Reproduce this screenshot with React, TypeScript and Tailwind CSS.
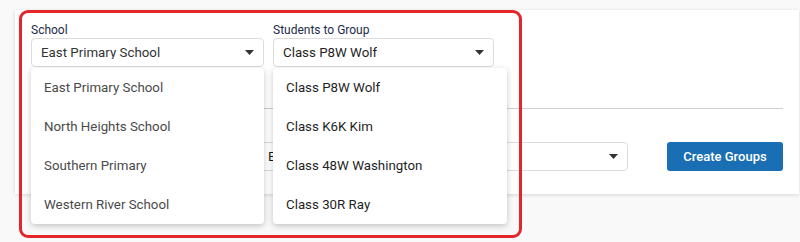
import React from "react";

const schools = [
  "East Primary School",
  "North Heights School",
  "Southern Primary",
  "Western River School",
];

const classes = [
  "Class P8W Wolf",
  "Class K6K Kim",
  "Class 48W Washington",
  "Class 30R Ray",
];

const Caret = () => (
  <svg width="9" height="5" viewBox="0 0 9 5" className="shrink-0">
    <path d="M0 0h9L4.5 5z" fill="#333" />
  </svg>
);

interface SelectProps {
  value: string;
  className?: string;
  textClass?: string;
}

const SelectBox = ({ value, className = "", textClass = "text-[#333]" }: SelectProps) => (
  <div
    className={`h-[29px] flex items-center justify-between pl-[9px] pr-[9px] bg-white border border-[#dcdcdc] rounded-[4px] ${className}`}
  >
    <span className={`text-[13.3px] leading-none whitespace-nowrap overflow-hidden ${textClass}`}>{value}</span>
    <Caret />
  </div>
);

interface MenuProps {
  items: string[];
  className?: string;
  textClass: string;
}

const Menu = ({ items, className = "", textClass }: MenuProps) => (
  <div
    className={`absolute top-[30px] left-0 z-10 bg-white rounded-[4px] shadow-[0_2px_6px_rgba(0,0,0,0.22)] ${className}`}
  >
    {items.map((item) => (
      <div key={item} className={`h-[39px] flex items-center pl-[13px] text-[13.3px] ${textClass}`}>
        {item}
      </div>
    ))}
  </div>
);

export default function App() {
  return (
    <div className="relative h-[242px] w-[800px] overflow-hidden bg-[#f9f9f9] font-['Roboto',sans-serif]">
      <div className="pt-[10px] pl-[15px] pr-px">
        <div className="bg-white shadow-[0_1px_4px_rgba(0,0,0,0.14)] h-[184px] px-4 pt-[13px]">
          <div className="flex gap-[9px]">
            <div className="w-[233px]">
              <div className="h-[15px] text-[12px] leading-[15px] text-[#1d2b4a]">School</div>
              <div className="relative">
                <SelectBox value="East Primary School" />
                <Menu items={schools} className="w-[233px]" textClass="text-[#4a4a4a]" />
              </div>
            </div>
            <div className="w-[221px]">
              <div className="h-[15px] text-[12px] leading-[15px] text-[#1d2b4a]">Students to Group</div>
              <div className="relative">
                <SelectBox value="Class P8W Wolf" textClass="text-[#1f1f1f]" />
                <Menu items={classes} className="w-[234px]" textClass="text-[#1f1f1f]" />
              </div>
            </div>
          </div>

          <div className="mt-[41px] h-px bg-[#cfcfcf]" />

          <div className="mt-[33px] flex items-center">
            <div className="w-[227px]" />
            {/* mostly hidden behind the open menus */}
            <SelectBox value="E" className="w-[370px] h-[28px]" textClass="text-[#1f1f1f]" />
            <button className="ml-[39px] h-[29px] w-[116px] rounded-[3px] bg-[#1a6fb4] text-white text-[13px] font-medium">
              Create Groups
            </button>
          </div>
        </div>
      </div>

      <div className="absolute left-[19px] top-[10px] w-[503px] h-[228px] border-[3px] border-[#e3262b] rounded-[9px] pointer-events-none" />
    </div>
  );
}
